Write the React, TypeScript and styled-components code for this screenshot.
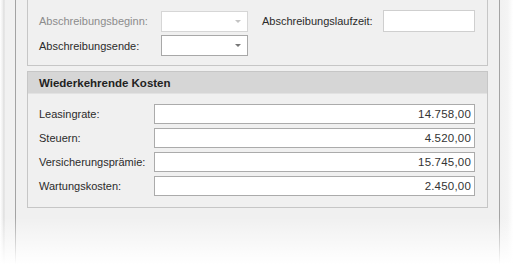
import React from 'react';
import styled, { createGlobalStyle } from 'styled-components';

const GlobalStyle = createGlobalStyle`
  html, body {
    margin: 0;
    padding: 0;
    background: #ffffff;
  }
  body {
    font-family: "Liberation Sans", Arial, sans-serif;
    font-size: 11px;
    color: #2b2b2b;
  }
`;

const Frame = styled.div`
  position: relative;
  width: 513px;
  height: 267px;
  overflow: hidden;
  display: flex;
  background: #f4f4f4;

  &::after {
    content: '';
    position: absolute;
    left: 0;
    right: 0;
    bottom: 0;
    height: 50px;
    background: linear-gradient(to bottom, rgba(255, 255, 255, 0), #ffffff 95%);
    pointer-events: none;
  }
`;

const Gutter = styled.div<{ $side: 'left' | 'right' }>`
  width: ${p => (p.$side === 'left' ? '15px' : '13px')};
  flex: none;
  background: ${p =>
    p.$side === 'left'
      ? 'linear-gradient(to right, #ffffff 0px, #ececec 3px, #dadada 4px, #f1f1f1 5px, #f1f1f1 100%)'
      : 'linear-gradient(to right, #f1f1f1 0px, #f4f4f4 60%, #ffffff 100%)'};
`;

const Panel = styled.div`
  flex: 1;
  border-left: 1px solid #a3a3a3;
  border-right: 1px solid #a3a3a3;
  background: #f0f0f0;
  padding: 0 11px;
  display: flex;
  flex-direction: column;
  gap: 5px;
`;

const Group = styled.div<{ $open?: boolean }>`
  border: 1px solid #c6c6c6;
  border-top: ${p => (p.$open ? 'none' : '1px solid #c6c6c6')};
  background: #f0f0f0;
`;

const GroupHeader = styled.div`
  height: 21px;
  background: #d6d6d6;
  border-bottom: 1px solid #e2e2e2;
  display: flex;
  align-items: center;
  padding-left: 11px;
  font-weight: bold;
  font-size: 11.5px;
  color: #222;
`;

const Rows = styled.div<{ $top: number; $bottom: number; $gap: number }>`
  display: flex;
  flex-direction: column;
  gap: ${p => p.$gap}px;
  padding: ${p => p.$top}px 12px ${p => p.$bottom}px 11px;
`;

const Row = styled.div`
  display: flex;
  align-items: center;
`;

const Label = styled.span<{ $width: number; $disabled?: boolean }>`
  width: ${p => p.$width}px;
  flex: none;
  color: ${p => (p.$disabled ? '#8c8c8c' : '#2b2b2b')};
  white-space: nowrap;
`;

const Combo = styled.div<{ $disabled?: boolean }>`
  width: 87px;
  height: 21px;
  box-sizing: border-box;
  border: 1px solid ${p => (p.$disabled ? '#d6d6d6' : '#a8a8a8')};
  background: #ffffff;
  display: flex;
  align-items: center;
  justify-content: flex-end;
  padding-right: 6px;
  color: ${p => (p.$disabled ? '#c4c4c4' : '#777777')};
`;

const Box = styled.div<{ $width?: number; $height: number; $light?: boolean }>`
  width: ${p => (p.$width ? `${p.$width}px` : 'auto')};
  flex: ${p => (p.$width ? 'none' : '1')};
  height: ${p => p.$height}px;
  box-sizing: border-box;
  border: 1px solid ${p => (p.$light ? '#cfcfcf' : '#ababab')};
  background: #ffffff;
  display: flex;
  align-items: center;
  justify-content: flex-end;
  padding-right: 3px;
  color: #333;
  font-size: 11.5px;
  letter-spacing: 0.2px;
`;

const Spacer = styled.div<{ $w: number }>`
  width: ${p => p.$w}px;
  flex: none;
`;

const Arrow = () => (
  <svg width="6" height="3" viewBox="0 0 6 3">
    <path d="M0 0 H6 L3 3 Z" fill="currentColor" />
  </svg>
);

const costs = [
  { label: 'Leasingrate:', value: '14.758,00' },
  { label: 'Steuern:', value: '4.520,00' },
  { label: 'Versicherungsprämie:', value: '15.745,00' },
  { label: 'Wartungskosten:', value: '2.450,00' },
];

export default function App() {
  return (
    <>
      <GlobalStyle />
      <Frame>
        <Gutter $side="left" />
        <Panel>
          <Group $open>
            <Rows $top={10} $bottom={9} $gap={3}>
              <Row>
                <Label $width={122} $disabled>Abschreibungsbeginn:</Label>
                <Combo $disabled><Arrow /></Combo>
                <Spacer $w={14} />
                <Label $width={121}>Abschreibungslaufzeit:</Label>
                <Box $width={92} $height={22} $light />
              </Row>
              <Row>
                <Label $width={122}>Abschreibungsende:</Label>
                <Combo><Arrow /></Combo>
              </Row>
            </Rows>
          </Group>
          <Group>
            <GroupHeader>Wiederkehrende Kosten</GroupHeader>
            <Rows $top={10} $bottom={11} $gap={4}>
              {costs.map(c => (
                <Row key={c.label}>
                  <Label $width={115}>{c.label}</Label>
                  <Box $height={20}>{c.value}</Box>
                </Row>
              ))}
            </Rows>
          </Group>
        </Panel>
        <Gutter $side="right" />
      </Frame>
    </>
  );
}
